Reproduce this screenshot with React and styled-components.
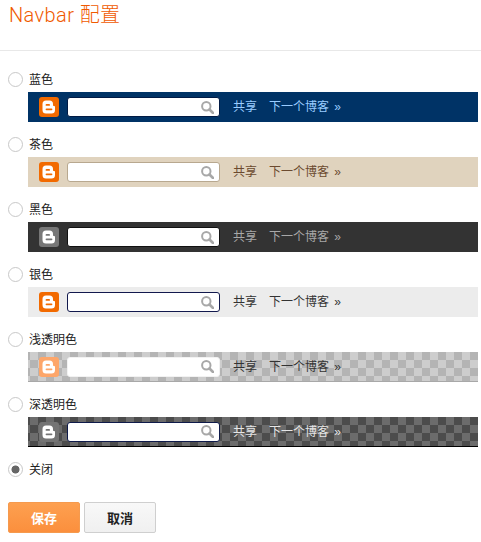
import React, { useState } from "react";
import styled, { createGlobalStyle, css } from "styled-components";

const Global = createGlobalStyle`
  html, body { margin: 0; padding: 0; background: #fff; }
  body { font-family: "Liberation Sans", Arial, "Noto Sans CJK SC", sans-serif; font-size: 12px; color: #222; }
`;

const checker = (a, b) => css`
  background-color: ${a};
  background-image: repeating-conic-gradient(${b} 0 25%, ${a} 0 50%);
  background-size: 16px 16px;
  background-position: -6px 0;
`;

const themes = {
  blue: { bg: css`background: #003366;`, link: "#99ccff", border: "#001a44", logo: "#f26a00" },
  tan: { bg: css`background: #e0d3be;`, link: "#6b4a2f", border: "#b8a88f", logo: "#f26a00" },
  black: { bg: css`background: #333333;`, link: "#a8a8a8", border: "#111111", logo: "#777777" },
  silver: { bg: css`background: #ececec;`, link: "#333333", border: "#12194d", logo: "#f26a00" },
  light: { bg: checker("#b4b4b4", "#cdcdcd"), link: "#333333", border: "#f2f2f2", logo: "#fda66a", edge: "#a8a8a8" },
  dark: { bg: checker("#4c4c4c", "#6c6c6c"), link: "#e6e6e6", border: "#0e1a4a", logo: "#747474", edge: "#000000" },
};

const options = [
  { id: "blue", label: "蓝色" },
  { id: "tan", label: "茶色" },
  { id: "black", label: "黑色" },
  { id: "silver", label: "银色" },
  { id: "light", label: "浅透明色" },
  { id: "dark", label: "深透明色" },
];

const Page = styled.div`
  width: 481px;
  height: 542px;
  overflow: hidden;
`;

const Header = styled.div`
  height: 51px;
  border-bottom: 1px solid #e8e8e8;
  padding: 2px 0 0 9px;
  box-sizing: border-box;
`;

const Title = styled.h1`
  margin: 0;
  font-family: Roboto, "Noto Sans CJK SC", sans-serif;
  font-size: 20px;
  line-height: 26px;
  font-weight: 300;
  color: #f05a00;
  letter-spacing: 0.4px;
`;

const Form = styled.div`
  padding: 21px 0 0 8px;
  display: flex;
  flex-direction: column;
`;

const Option = styled.div`
  height: 65px;
`;

const LabelRow = styled.label`
  display: flex;
  align-items: flex-start;
  gap: 6px;
  height: 17px;
  line-height: 17px;
  color: #222;
`;

const Radio = styled.input.attrs({ type: "radio" })`
  appearance: none;
  width: 15px;
  height: 15px;
  margin: 0;
  box-sizing: border-box;
  border: 1px solid #c8c8c8;
  border-radius: 50%;
  background: #fff;
  &:checked {
    background: radial-gradient(circle, #666 0 3.6px, #fff 4.4px);
  }
`;

const Bar = styled.div`
  ${(p) => themes[p.$theme].bg}
  margin: 3px 0 0 20px;
  width: 450px;
  height: 30px;
  box-sizing: border-box;
  display: flex;
  align-items: center;
  padding-left: 11px;
  ${(p) => themes[p.$theme].edge && `border-bottom: 1px solid ${themes[p.$theme].edge};`}
`;

const SearchBox = styled.div`
  width: 153px;
  height: 20px;
  margin-left: 8px;
  box-sizing: border-box;
  background: #fff;
  border: 1px solid ${(p) => themes[p.$theme].border};
  border-radius: 3px;
  display: flex;
  align-items: center;
  justify-content: flex-end;
  padding-right: 5px;
`;

const BarLink = styled.a`
  color: ${(p) => themes[p.$theme].link};
  font-size: 12px;
  line-height: 16px;
  margin-left: ${(p) => p.$gap}px;
  white-space: nowrap;
`;

const Chevrons = styled.span`
  display: inline-block;
  width: 12px;
  text-align: right;
`;

const Off = styled.div`
  height: 40px;
`;

const Actions = styled.div`
  display: flex;
  gap: 4px;
`;

const Button = styled.button`
  width: 72px;
  height: 31px;
  box-sizing: border-box;
  padding: 0;
  border-radius: 2px;
  font: bold 13px "Liberation Sans", Arial, "Noto Sans CJK SC", sans-serif;
  ${(p) =>
    p.$primary
      ? css`
          border: 1px solid #f59a4e;
          background: linear-gradient(#fda050, #fb8f3d);
          color: #fff;
        `
      : css`
          border: 1px solid #cfcfcf;
          background: linear-gradient(#f8f8f8, #f0f0f0);
          color: #222;
        `}
`;

const BloggerLogo = ({ color }) => (
  <svg width="20" height="20" viewBox="0 0 20 20">
    <rect width="20" height="20" rx="3" fill={color} />
    <path
      fillRule="evenodd"
      fill="#fff"
      d="M7 3.500h3.500A3.500 3.500 0 0 1 14 7v1c0 .6.4 1 1 1h.2c.5 0 .8.3.8.8V13a3.500 3.500 0 0 1-3.500 3.500H7A3.500 3.500 0 0 1 3.500 13V7A3.500 3.500 0 0 1 7 3.500zM7.500 7a.9.9 0 0 0 0 1.800h2.600a.9.9 0 0 0 0-1.800zM7.500 11.400a.9.9 0 0 0 0 1.800h5a.9.9 0 0 0 0-1.800z"
    />
  </svg>
);

const SearchIcon = () => (
  <svg width="13" height="13" viewBox="0 0 13 13" fill="none" stroke="#a8a8a8">
    <circle cx="5.300" cy="5.300" r="4.200" strokeWidth="2" />
    <path d="M8.500 8.500L12 12" strokeWidth="2.600" strokeLinecap="round" />
  </svg>
);

const NavbarPreview = ({ theme }) => (
  <Bar $theme={theme}>
    <BloggerLogo color={themes[theme].logo} />
    <SearchBox $theme={theme}>
      <SearchIcon />
    </SearchBox>
    <BarLink $theme={theme} $gap={13}>共享</BarLink>
    <BarLink $theme={theme} $gap={12}>下一个博客<Chevrons>»</Chevrons></BarLink>
  </Bar>
);

export default function App() {
  const [selected, setSelected] = useState("off");

  return (
    <Page>
      <Global />
      <Header>
        <Title>Navbar 配置</Title>
      </Header>
      <Form>
        {options.map((o) => (
          <Option key={o.id}>
            <LabelRow>
              <Radio name="navbar" checked={selected === o.id} onChange={() => setSelected(o.id)} />
              {o.label}
            </LabelRow>
            <NavbarPreview theme={o.id} />
          </Option>
        ))}
        <Off>
          <LabelRow>
            <Radio name="navbar" checked={selected === "off"} onChange={() => setSelected("off")} />
            关闭
          </LabelRow>
        </Off>
        <Actions>
          <Button $primary>保存</Button>
          <Button>取消</Button>
        </Actions>
      </Form>
    </Page>
  );
}
